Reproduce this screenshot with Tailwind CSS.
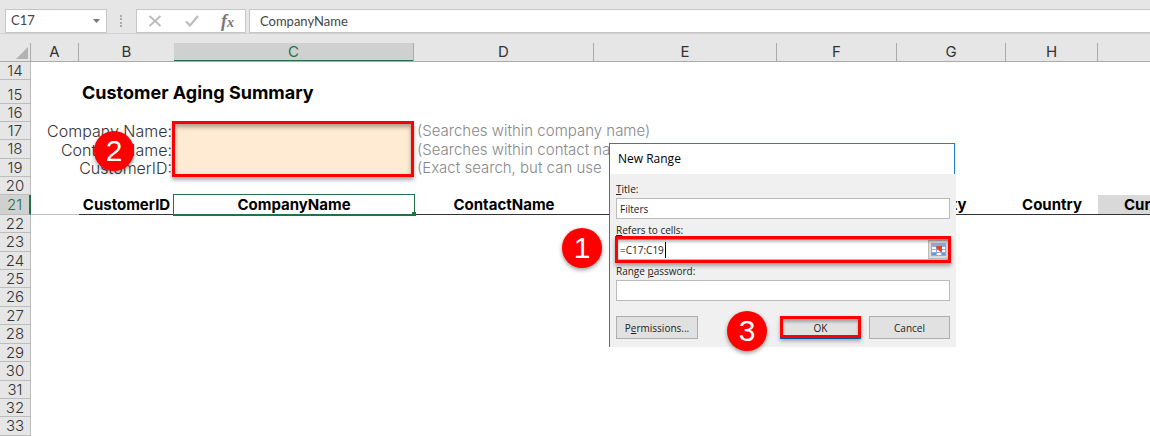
<!DOCTYPE html>
<html lang="en">
<head>
<meta charset="utf-8">
<title>Customer Aging Summary</title>
<script src="https://cdn.jsdelivr.net/npm/@tailwindcss/browser@4"></script>
</head>
<body class="relative min-h-screen overflow-hidden bg-white font-['Inter',sans-serif] text-[#333]">
<header class="flex items-center bg-[#e6e6e6] pt-[9px] pl-[5px] font-['Lato',sans-serif] text-[#444]">
  <div class="flex h-6 w-[102px] items-center border border-[#c6c6c6] bg-white pr-1.5 pl-[5px]">
    <input aria-label="Name box" value="C17" class="w-full min-w-0 flex-1 text-[13px] outline-none">
    <button aria-label="Open name list"><svg class="block h-1 w-[7px]" viewBox="0 0 7 4"><path d="M0 0h7L3.500 4z" fill="#777"/></svg></button>
  </div>
  <svg class="ml-[12px] h-4 w-[5px]" viewBox="0 0 5 16" fill="#aaa"><path d="M1 2h2v2H1zM1 5h2v2H1zM1 9h2v2H1zM1 12h2v2H1z"/></svg>
  <div class="ml-3 flex h-6 w-[110px] items-center justify-between border border-[#c6c6c6] bg-white px-[11px]">
    <button aria-label="Cancel entry"><svg class="block h-3 w-3.5" viewBox="0 0 14 12" fill="none" stroke="#bbb" stroke-width="1.800"><path d="M1.500 1l11 10M12.500 1l-11 10"/></svg></button>
    <button aria-label="Enter"><svg class="block h-3 w-3.5" viewBox="0 0 14 12" fill="none" stroke="#bcbcbc" stroke-width="2.200"><path d="M1 6.500L5 10.500 13 1"/></svg></button>
    <button aria-label="Insert function" class="flex h-5 items-center font-['Liberation_Serif',serif] font-bold text-[#777] italic"><span class="text-lg leading-5">f</span><span class="pt-1 text-sm leading-4">x</span></button>
  </div>
  <input aria-label="Formula bar" value="CompanyName" class="ml-[3px] h-6 min-w-0 flex-1 border border-r-0 border-[#c6c6c6] bg-white pl-[10px] text-[13px] outline-none">
</header>
<div class="h-[10px] border-t border-[#d2d2d2] bg-[#e6e6e6]"></div>

<table class="w-full table-fixed border-separate border-spacing-0 text-[15px] leading-4 whitespace-nowrap">
  <colgroup><col class="w-[31px]"><col class="w-[48px]"><col class="w-[95px]"><col class="w-[240px]"><col class="w-[180px]"><col class="w-[183px]"><col class="w-[120px]"><col class="w-[109px]"><col class="w-[92px]"><col></colgroup>
  <thead class="bg-[#e6e6e6]">
    <tr class="h-[19px] *:border-b *:border-[#ababab] *:p-0 *:font-normal">
      <td class="border-r"><svg class="mt-0.5 ml-4 block h-3 w-3" viewBox="0 0 12 12"><path d="M12 0v12H0z" fill="#b2b2b2"/></svg></td>
      <th class="border-r">A</th><th>B</th>
      <th class="border-r bg-[#d0d0d0] text-[#217346] shadow-[inset_0_-1px_0_#217346]">C</th>
      <th class="border-r">D</th><th class="border-r">E</th><th class="border-r">F</th><th class="border-r">G</th><th class="border-r">H</th><th></th>
    </tr>
  </thead>
  <tbody class="font-light [&_td]:p-0 [&_th]:border-r [&_th]:border-b [&_th]:border-[#bdbdbd] [&_th]:bg-[#e6e6e6] [&_th]:p-0 [&_th]:font-light">
    <tr class="h-[18px]"><th>14</th></tr>
    <tr class="h-6"><th class="align-bottom">15</th><td></td><td class="pt-0.5! pl-[3px]! text-lg leading-5 font-bold text-black">Customer Aging Summary</td></tr>
    <tr class="h-[18px]"><th>16</th></tr>
    <tr class="h-[18px]"><th>17</th><td></td><td><div class="flex justify-end pr-0.5 text-base leading-4">Company Name:</div></td><td rowspan="3" class="bg-[#ffead3]"></td><td class="pl-[3px]! text-[#888]">(Searches within company name)</td></tr>
    <tr class="h-[19px]"><th>18</th><td></td><td><div class="flex justify-end pr-0.5 text-base leading-4">Contact Name:</div></td><td class="pl-[3px]! text-[#888]">(Searches within contact name)</td></tr>
    <tr class="h-[18px]"><th>19</th><td></td><td><div class="flex justify-end pr-0.5 text-base leading-4">CustomerID:</div></td><td class="pl-[3px]! text-[#888]">(Exact search, but can use</td></tr>
    <tr class="h-[18px]"><th>20</th></tr>
    <tr class="h-5 text-center font-bold text-black *:border-b *:border-[#333]">
      <th class="border-r-2! border-r-[#217346]! bg-[#d0d0d0]! text-[#217346]">21</th><td class="border-[#c0c0c0]!"></td><td>CustomerID</td>
      <td class="relative border-[#217346]! outline outline-[#217346]">CompanyName<span class="absolute -right-0.5 -bottom-0.5 size-1 bg-[#217346]"></span></td>
      <td>ContactName</td><td>Address</td><td>Region</td><td>City</td><td>Country</td><td class="bg-[#d9d9d9] pl-[26px]! text-left">Current</td>
    </tr>
    <tr class="h-[18px]"><th>22</th></tr>
    <tr class="h-[19px]"><th>23</th></tr>
    <tr class="h-[18px]"><th>24</th></tr>
    <tr class="h-[18px]"><th>25</th></tr>
    <tr class="h-[19px]"><th>26</th></tr>
    <tr class="h-[18px]"><th>27</th></tr>
    <tr class="h-[19px]"><th>28</th></tr>
    <tr class="h-[18px]"><th>29</th></tr>
    <tr class="h-[19px]"><th>30</th></tr>
    <tr class="h-[18px]"><th>31</th></tr>
    <tr class="h-[18px]"><th>32</th></tr>
    <tr class="h-[19px]"><th>33</th></tr>
  </tbody>
</table>

<div class="absolute top-[121px] left-[172px] h-[56px] w-[242px] border-3 border-[#f00] shadow-[0_3px_4px_#0005,inset_0_3px_4px_#0005]"></div>

<form role="dialog" aria-labelledby="dialog-title" class="absolute top-[143px] left-[609px] w-[347px] border-l border-[#1a7fd4] bg-[#f0f0f0] font-['Open_Sans',sans-serif] text-[10px] leading-4 text-[#222]">
  <h2 id="dialog-title" class="mr-px flex h-[31px] items-center border-t border-r border-[#1a7fd4] bg-white pl-2 text-xs text-black">New Range</h2>
  <div class="px-1.5 pt-[7px] pb-2">
    <div class="flex flex-col gap-[3px]">
      <div class="flex flex-col gap-px">
        <label for="title"><u>T</u>itle:</label>
        <input id="title" value="Filters" class="h-[21px] border border-[#bbb] bg-white px-[3px] outline-none">
      </div>
      <div class="flex flex-col gap-px">
        <label for="cells"><u>R</u>efers to cells:</label>
        <div class="relative flex h-[21px] border border-[#bbb] bg-white">
          <div class="flex min-w-0 flex-1 items-center pl-[3px]">
            <input id="cells" value="=C17:C19" class="w-[46px] border-r border-black outline-none">
          </div>
          <button type="button" aria-label="Select range" class="flex w-[21px] items-center justify-center border border-[#bbb] bg-[#dcdcdc]">
            <svg class="h-[13px] w-[15px]" viewBox="0 0 15 13"><path fill="#fff" d="M0 0h15v13H0z"/><path fill="#8ba9dc" d="M0 0h15v3H0z"/><path d="M0 3.500h15M0 6.500h15M0 9.500h15M0 12.500h15M.5 0v13M5.500 0v13M10.500 0v13M14.500 0v13" stroke="#8fabdd" fill="none"/><path fill="#6f93d6" d="M1 10h4v2H1zM11 10h3v2h-3z"/><path d="M5 3h6v5l-1 1.500-2-2-2-1z" fill="#e3432b"/></svg>
          </button>
          <div class="pointer-events-none absolute -inset-x-0.5 -top-1 -bottom-1 border-3 border-[#f00] shadow-[0_3px_4px_#0005,inset_0_3px_3px_#0004]"></div>
        </div>
      </div>
      <div class="flex flex-col gap-px">
        <label for="password">Range <u>p</u>assword:</label>
        <input id="password" type="password" class="h-[21px] border border-[#bbb] bg-white px-[3px] outline-none">
      </div>
    </div>
    <div class="mt-[15px] flex gap-2">
      <button type="button" class="h-[23px] w-[82px] border border-[#adadad] bg-[#e1e1e1]">P<u>e</u>rmissions...</button>
      <button type="button" class="relative ml-auto h-[23px] w-[81px] border-2 border-[#0078d7] bg-[#e1e1e1]">OK<span class="absolute -inset-0.5 -bottom-px border-3 border-[#f00] shadow-[0_3px_4px_#0005,inset_0_3px_3px_#0004]"></span></button>
      <button type="button" class="h-[23px] w-[81px] border border-[#adadad] bg-[#e1e1e1]">Cancel</button>
    </div>
  </div>
</form>

<div class="absolute top-[131px] left-[94px] flex size-10 items-center justify-center rounded-full bg-[#f00] font-['Liberation_Sans',sans-serif] text-3xl text-white shadow-[0_2px_4px_#0006]">2</div>
<div class="absolute top-[228px] left-[562px] flex size-10 items-center justify-center rounded-full bg-[#f00] font-['Liberation_Sans',sans-serif] text-3xl text-white shadow-[0_2px_4px_#0006]">1</div>
<div class="absolute top-[311px] left-[727px] flex size-10 items-center justify-center rounded-full bg-[#f00] font-['Liberation_Sans',sans-serif] text-3xl text-white shadow-[0_2px_4px_#0006]">3</div>
</body>
</html>
